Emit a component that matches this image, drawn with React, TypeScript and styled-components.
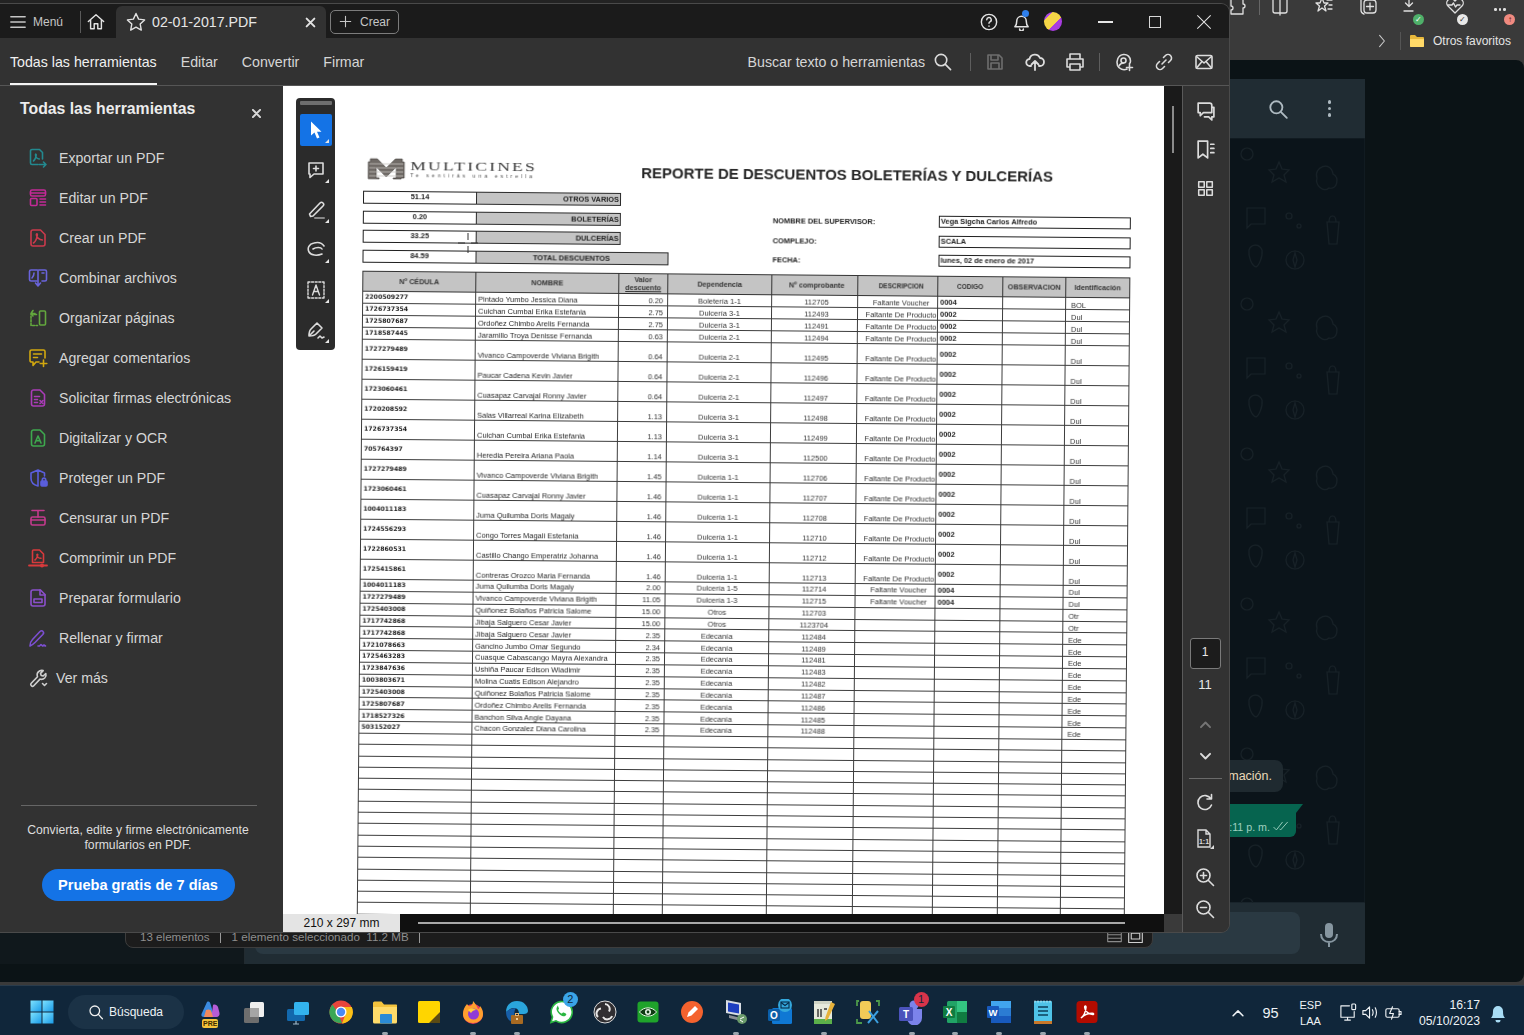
import React from 'react';
import styled, { createGlobalStyle } from 'styled-components';

const GlobalStyle = createGlobalStyle`
  html, body {
    margin: 0;
    width: 1524px;
    height: 1035px;
    overflow: hidden;
    background: #10263a;
    font-family: "Liberation Sans", Arial, sans-serif;
  }
`;

const Icon = styled.svg.attrs<any>(p => ({
  width: p.$size ?? 20,
  height: p.$size ?? 20,
  viewBox: p.viewBox ?? '0 0 20 20',
  fill: 'none',
  stroke: 'currentColor',
  strokeWidth: p.strokeWidth ?? 1.6,
  strokeLinecap: 'round',
  strokeLinejoin: 'round',
}))<{ $size?: number; $color?: string }>`
  display: block;
  flex: none;
  color: ${({ $color }) => $color || 'inherit'};
`;

/* ---------- sidebar tool icons ---------- */
const toolIcons: Record<string, React.ReactNode> = {
  export: (
    <>
      <path d="M14.5 11V4.5L11.5 1.5H4A1.5 1.5 0 0 0 2.5 3v12A1.5 1.5 0 0 0 4 16.5h6" />
      <path d="M5.5 13c1.4-1 2.4-3.5 2.7-6 .1-1-.7-1.2-.7 0 0 2 1.9 3.8 3.8 4" />
      <path d="M11 16.5h7M15.5 14l2.5 2.5-2.5 2.5" />
    </>
  ),
  edit: (
    <>
      <rect x="2.5" y="2" width="15" height="6" rx="1.5" />
      <path d="M2.5 5h15" />
      <rect x="2.5" y="10.5" width="6.5" height="7" rx="1" />
      <path d="M12 11h5.5M12 14h5.5M12 17h5.5" />
    </>
  ),
  create: (
    <>
      <path d="M17 6.5V16a2 2 0 0 1-2 2H5a2 2 0 0 1-2-2V4a2 2 0 0 1 2-2h7.5z" />
      <path d="M5.5 15c2-1.5 3.5-5 3.8-8 .2-1.5-1-1.5-.9 0 .2 2.5 3 5 6 5" />
    </>
  ),
  combine: (
    <>
      <path d="M9 2H3A1.5 1.5 0 0 0 1.5 3.5v8A1.5 1.5 0 0 0 3 13h6M11 2h6a1.5 1.5 0 0 1 1.5 1.5v8A1.5 1.5 0 0 1 17 13h-3" />
      <path d="M10 2v14.5M7.5 15l2.5 3 2.5-3" />
      <path d="M4 10c1-1 2-3 2-5M14 5h2" />
    </>
  ),
  organize: (
    <>
      <rect x="11.5" y="3" width="6" height="14" rx="1" />
      <path d="M8.5 6.5H3v11h6.5" strokeDasharray="2 1.6" />
      <path d="M3 5.5h4M5 2.5l-2 3 2 2.5" />
    </>
  ),
  comment: (
    <>
      <path d="M11 14H8l-3 3.5V14H3.5A1.5 1.5 0 0 1 2 12.5v-9A1.5 1.5 0 0 1 3.5 2h12A1.5 1.5 0 0 1 17 3.5V10" />
      <path d="M5.5 6h8M5.5 9.5h4M15.5 12v6.5M12.2 15.5h6.6" />
    </>
  ),
  sign: (
    <>
      <path d="M16.5 6.5V16a2 2 0 0 1-2 2h-9a2 2 0 0 1-2-2V4a2 2 0 0 1 2-2h6.5z" />
      <path d="M6.5 8.5h5M6.5 11.5h3M6.5 14.5h3M12 12.5l3 3M15 12.5l-3 3" />
    </>
  ),
  ocr: (
    <>
      <path d="M16.5 6.5V16a2 2 0 0 1-2 2h-9a2 2 0 0 1-2-2V4a2 2 0 0 1 2-2h6.5z" />
      <path d="M7 15l3-7 3 7M8 12.7h4" />
    </>
  ),
  protect: (
    <>
      <path d="M10 2L3 5v5.5c0 3.5 2.8 6.5 7 7.5M10 2l6.5 3v3M10 2v16" />
      <rect x="13" y="13" width="6" height="5" rx="1" fill="currentColor" />
      <path d="M14.3 13v-1.2a1.7 1.7 0 0 1 3.4 0V13" />
    </>
  ),
  redact: (
    <>
      <path d="M4 2.5h12M10 2.5V9" />
      <rect x="3" y="9" width="14" height="8" rx="1.5" />
      <path d="M3 12h14" />
    </>
  ),
  compress: (
    <>
      <path d="M15.5 6V14.5H4.5V3a1 1 0 0 1 1-1h6z" />
      <path d="M7 12c1.4-1 2.4-3 2.7-5 .1-1-.8-1-.7 0 .1 1.8 2 3.3 4 3.3" />
      <path d="M1 17.5h18" strokeWidth="1.8" />
      <circle cx="14" cy="17.5" r="1.2" fill="currentColor" />
    </>
  ),
  prepare: (
    <>
      <path d="M17 6.5V16a2 2 0 0 1-2 2H5a2 2 0 0 1-2-2V4a2 2 0 0 1 2-2h7.5z" />
      <path d="M12 2v5h5" />
      <rect x="6" y="11" width="8" height="3.5" />
    </>
  ),
  fill: (
    <>
      <path d="M2 18c0-3 1-5 2.5-6.500L12 3.500c1-1 2.300-1 3 0 .8.800.7 2-.2 3L7.500 14c-1.500 1.400-3 3-5.500 4z" />
      <path d="M10 18h1.500l1.500-1.500 1.500 1.500 1.500-1 1.500 1" />
    </>
  ),
  more: (
    <>
      <path d="M3 15.500l6.500-6.800c-.8-2.200 0-4.500 2-5.700 1.200-.7 2.600-.8 3.700-.4L12.500 5.400l.7 2 2 .6 2.600-2.500c.5 1.500.1 3.300-1.100 4.500-1.400 1.300-3 1.600-4.700 1.100L5.500 18c-1.400 1.200-3.500-1-2.500-2.500z" />
      <path d="M14.5 15.500l2 2 2-2" />
    </>
  ),
};

const tools = [
  { key: 'export', label: 'Exportar un PDF', color: '#23898f' },
  { key: 'edit', label: 'Editar un PDF', color: '#c32a97' },
  { key: 'create', label: 'Crear un PDF', color: '#cb3a4c' },
  { key: 'combine', label: 'Combinar archivos', color: '#6a64dc' },
  { key: 'organize', label: 'Organizar páginas', color: '#63a83e' },
  { key: 'comment', label: 'Agregar comentarios', color: '#d2a80f' },
  { key: 'sign', label: 'Solicitar firmas electrónicas', color: '#aa3cb8' },
  { key: 'ocr', label: 'Digitalizar y OCR', color: '#3ea84e' },
  { key: 'protect', label: 'Proteger un PDF', color: '#5a5edc' },
  { key: 'redact', label: 'Censurar un PDF', color: '#c43a8d' },
  { key: 'compress', label: 'Comprimir un PDF', color: '#d83a3c' },
  { key: 'prepare', label: 'Preparar formulario', color: '#8b50cb' },
  { key: 'fill', label: 'Rellenar y firmar', color: '#7c4fd2' },
  { key: 'more', label: 'Ver más', color: '#cfcfcf' },
];

/* ---------- document data ---------- */
const VOUCHER = 'Faltante Voucher';
const PRODUCT = 'Faltante De Producto';

type ReportRow = [string, string, string, string, string, string, string, string];

const shortTop: ReportRow[] = [
  ['2200509277', 'Pintado Yumbo Jessica Diana', '0.20', 'Boletería 1-1', '112705', VOUCHER, '0004', 'BOL'],
  ['1726737354', 'Cuichan Cumbal Erika Estefania', '2.75', 'Dulcería 3-1', '112493', PRODUCT, '0002', 'Dul'],
  ['1725807687', 'Ordoñez Chimbo Arelis Fernanda', '2.75', 'Dulcería 3-1', '112491', PRODUCT, '0002', 'Dul'],
  ['1718587445', 'Jaramillo Troya Denisse Fernanda', '0.63', 'Dulcería 2-1', '112494', PRODUCT, '0002', 'Dul'],
];

const tallRows: ReportRow[] = [
  ['1727279489', 'Vivanco Campoverde Viviana Brigith', '0.64', 'Dulcería 2-1', '112495', PRODUCT, '0002', 'Dul'],
  ['1726159419', 'Paucar Cadena Kevin Javier', '0.64', 'Dulcería 2-1', '112496', PRODUCT, '0002', 'Dul'],
  ['1723060461', 'Cuasapaz Carvajal Ronny Javier', '0.64', 'Dulcería 2-1', '112497', PRODUCT, '0002', 'Dul'],
  ['1720208592', 'Salas Villarreal Karina Elizabeth', '1.13', 'Dulcería 3-1', '112498', PRODUCT, '0002', 'Dul'],
  ['1726737354', 'Cuichan Cumbal Erika Estefania', '1.13', 'Dulcería 3-1', '112499', PRODUCT, '0002', 'Dul'],
  ['705764397', 'Heredia Pereira Ariana Paola', '1.14', 'Dulcería 3-1', '112500', PRODUCT, '0002', 'Dul'],
  ['1727279489', 'Vivanco Campoverde Viviana Brigith', '1.45', 'Dulcería 1-1', '112706', PRODUCT, '0002', 'Dul'],
  ['1723060461', 'Cuasapaz Carvajal Ronny Javier', '1.46', 'Dulcería 1-1', '112707', PRODUCT, '0002', 'Dul'],
  ['1004011183', 'Juma Quilumba Doris Magaly', '1.46', 'Dulcería 1-1', '112708', PRODUCT, '0002', 'Dul'],
  ['1724556293', 'Congo Torres Magali Estefania', '1.46', 'Dulcería 1-1', '112710', PRODUCT, '0002', 'Dul'],
  ['1722860531', 'Castillo Chango Emperatriz Johanna', '1.46', 'Dulcería 1-1', '112712', PRODUCT, '0002', 'Dul'],
  ['1725415861', 'Contreras Orozco Maria Fernanda', '1.46', 'Dulcería 1-1', '112713', PRODUCT, '0002', 'Dul'],
];

const shortBottom: ReportRow[] = [
  ['1004011183', 'Juma Quilumba Doris Magaly', '2.00', 'Dulcería 1-5', '112714', VOUCHER, '0004', 'Dul'],
  ['1727279489', 'Vivanco Campoverde Viviana Brigith', '11.05', 'Dulcería 1-3', '112715', VOUCHER, '0004', 'Dul'],
  ['1725403008', 'Quiñonez Bolaños Patricia Salome', '15.00', 'Otros', '112703', '', '', 'Otr'],
  ['1717742868', 'Jibaja Salguero Cesar Javier', '15.00', 'Otros', '1123704', '', '', 'Otr'],
  ['1717742868', 'Jibaja Salguero Cesar Javier', '2.35', 'Edecanía', '112484', '', '', 'Ede'],
  ['1721078663', 'Gancino Jumbo Omar Segundo', '2.34', 'Edecanía', '112489', '', '', 'Ede'],
  ['1725463283', 'Cuasque Cabascango Mayra Alexandra', '2.35', 'Edecanía', '112481', '', '', 'Ede'],
  ['1723847636', 'Ushiña Paucar Edison Wladimir', '2.35', 'Edecanía', '112483', '', '', 'Ede'],
  ['1003803671', 'Molina Cuatis Edison Alejandro', '2.35', 'Edecanía', '112482', '', '', 'Ede'],
  ['1725403008', 'Quiñonez Bolaños Patricia Salome', '2.35', 'Edecanía', '112487', '', '', 'Ede'],
  ['1725807687', 'Ordoñez Chimbo Arelis Fernanda', '2.35', 'Edecanía', '112486', '', '', 'Ede'],
  ['1718527326', 'Banchon Silva Angie Dayana', '2.35', 'Edecanía', '112485', '', '', 'Ede'],
  ['503152027', 'Chacon Gonzalez Diana Carolina', '2.35', 'Edecanía', '112488', '', '', 'Ede'],
];

const summary = [
  { value: '51.14', label: 'OTROS VARIOS' },
  { value: '0.20', label: 'BOLETERÍAS' },
  { value: '33.25', label: 'DULCERÍAS' },
  { value: '84.59', label: 'TOTAL DESCUENTOS', total: true },
];

const supervisor = [
  ['NOMBRE DEL SUPERVISOR:', 'Vega Sigcha Carlos Alfredo'],
  ['COMPLEJO:', 'SCALA'],
  ['FECHA:', 'lunes, 02 de enero de 2017'],
];

const columnWidths = [113, 143, 49, 104, 86, 80, 65, 63, 64];
const blankRows = Array.from({ length: 18 }, (_, i) => i);

/* ---------- taskbar icons ---------- */
const Win = () => (
  <svg width="24" height="24" viewBox="0 0 24 24">
    <defs>
      <linearGradient id="win" x1="0" y1="0" x2="1" y2="1">
        <stop offset="0" stopColor="#7fe3ff" />
        <stop offset="1" stopColor="#1a9be8" />
      </linearGradient>
    </defs>
    <rect x="0.5" y="0.5" width="11" height="11" fill="url(#win)" />
    <rect x="12.5" y="0.5" width="11" height="11" fill="url(#win)" />
    <rect x="0.5" y="12.5" width="11" height="11" fill="url(#win)" />
    <rect x="12.5" y="12.5" width="11" height="11" fill="url(#win)" />
  </svg>
);

const Copilot = () => (
  <svg width="24" height="24" viewBox="0 0 24 24">
    <path d="M9 2c2-1 3 0 3.5 2l3 10c.5 2-1 3-3 3H6c-2 0-3-1-2.5-3z" fill="#3b8be0" />
    <path d="M15 5c2-1 4 0 5 2l1.5 6c.5 2-1 4-3 4h-5z" fill="#b65cd6" />
    <path d="M8 10c2-1 5-1 5.5 2L15 17H6z" fill="#f28a5c" />
  </svg>
);

const TaskView = () => (
  <svg width="26" height="26" viewBox="0 0 26 26">
    <rect x="3" y="9" width="15" height="15" rx="1.5" fill="#6e6e6e" />
    <rect x="9" y="3" width="14" height="15" rx="1.5" fill="#efefef" />
    <rect x="9" y="9" width="9" height="9" fill="#a5a5a5" />
  </svg>
);

const Remote = () => (
  <svg width="26" height="26" viewBox="0 0 26 26">
    <rect x="2" y="10" width="18" height="12" rx="1.5" fill="#1268ad" />
    <rect x="9" y="3" width="15" height="13" rx="1.5" fill="#33b3ee" />
    <path d="M11 22v3M8 25h6" stroke="#9fb8c9" strokeWidth="1.2" />
  </svg>
);

const Chrome = () => (
  <svg width="24" height="24" viewBox="0 0 24 24">
    <circle cx="12" cy="12" r="11.5" fill="#e8453c" />
    <path d="M1.5 17A11.5 11.5 0 0 1 3.5 4.5L9 13l4 10A11.5 11.5 0 0 1 1.5 17z" fill="#3aa757" />
    <path d="M12 7h10.8A11.5 11.5 0 0 1 13 23.5L17 13z" fill="#fbc116" />
    <circle cx="12" cy="12" r="5.5" fill="#fff" />
    <circle cx="12" cy="12" r="4.2" fill="#4a8af4" />
  </svg>
);

const Folder = () => (
  <svg width="26" height="26" viewBox="0 0 26 26">
    <path d="M1 4a1.5 1.5 0 0 1 1.5-1.5h7l2.5 3h12.5A1.5 1.5 0 0 1 25 7v16H1z" fill="#f4c33d" />
    <path d="M1 8h24v15a1.5 1.5 0 0 1-1.5 1.5h-21A1.5 1.5 0 0 1 1 23z" fill="#ffdb6a" />
    <rect x="8" y="15" width="12" height="9.5" rx="1" fill="#2b8bd6" />
  </svg>
);

const Sticky = () => (
  <svg width="24" height="24" viewBox="0 0 24 24">
    <rect x="1" y="1" width="22" height="22" rx="1.5" fill="#ffd500" />
    <path d="M23 12v11H12z" fill="#5a4a14" />
  </svg>
);

const Firefox = () => (
  <svg width="24" height="24" viewBox="0 0 24 24">
    <circle cx="12" cy="14" r="10" fill="#e8395d" />
    <path d="M6 4c-3 3-4 7-4 10 0 5 4 9 10 9s10-4 10-9c0-3-1-6-3-8 0 2-1 3-2 3-1-3-3-6-5-8 0 3-1 4-3 5C8 6.5 7 5.5 6 4z" fill="#ff9f2e" />
    <circle cx="12.5" cy="14" r="5.5" fill="#8f3ad6" />
    <path d="M7 10c2-2 6-2 8 0-2 0-4 1-5 3-1-1-2-2-3-3z" fill="#ffcf3a" />
  </svg>
);

const Edge = () => (
  <svg width="24" height="24" viewBox="0 0 24 24">
    <path d="M1 12C1 5 6 1 12 1c7 0 11 5 11 10 0 2-2 3-4 3h-5c0-4-2-6-5-6-4 0-6 3-8 4z" fill="#2aa5dc" />
    <path d="M1 12c0 6 4 11 10 11 1-2 0-4-1-6-1-3-1-6 1-9-5 0-8 2-10 4z" fill="#175ea8" />
    <rect x="6" y="15" width="12" height="9" rx="1" fill="#a86a22" />
    <rect x="10.5" y="13.5" width="3" height="2" fill="none" stroke="#e6b06a" />
    <rect x="11" y="18" width="2" height="2" fill="#f2cf95" />
  </svg>
);

const WhatsApp = () => (
  <svg width="24" height="24" viewBox="0 0 24 24">
    <path d="M2 22.5l1.5-5.500A10.500 10.500 0 1 1 7 20.800z" fill="#fff" stroke="#2bb741" strokeWidth="1.6" />
    <path d="M8.5 6.5c-1 1-1.500 2.500-.5 4.500 1.300 2.700 3.400 4.500 6 5.200 1.500.4 3-.5 3.300-1.700.1-.5-.1-.8-.6-1l-2-1c-.5-.2-.8 0-1 .3-.4.600-.8.900-1.400.6-1.300-.6-2.300-1.600-3-3-.2-.5 0-.8.400-1.200.3-.4.300-.7.200-1l-.8-1.900c-.2-.5-.7-.6-1-.4z" fill="#2bb741" />
  </svg>
);

const Obs = () => (
  <svg width="24" height="24" viewBox="0 0 24 24">
    <circle cx="12" cy="12" r="11" fill="#302e31" stroke="#dcdcdc" strokeWidth="1" />
    <path d="M12 4a5 5 0 0 1 4 7.5M5 17a5 5 0 0 1 3-8.5M19 16a5 5 0 0 1-9 1" stroke="#e6e6e6" strokeWidth="2" fill="none" />
  </svg>
);

const EyeApp = () => (
  <svg width="24" height="24" viewBox="0 0 24 24">
    <rect x="1.5" y="1.5" width="21" height="21" rx="3" fill="#1fa32b" />
    <path d="M3.5 12c4-5.5 13-5.5 17 0-4 5.5-13 5.5-17 0z" fill="#0e3a12" stroke="#e6f5e6" />
    <circle cx="12" cy="12" r="3" fill="#e6f5e6" />
    <circle cx="12" cy="12" r="1.4" fill="#0e3a12" />
  </svg>
);

const PenApp = () => (
  <svg width="24" height="24" viewBox="0 0 24 24">
    <circle cx="12" cy="12" r="11" fill="#f4622e" />
    <path d="M7 17l1.5-4.5L15 6l3 3-6.5 6.5z" fill="#fff" />
  </svg>
);

const Computer = () => (
  <svg width="26" height="26" viewBox="0 0 26 26">
    <path d="M3 1l15 3v13L3 14z" fill="#d8dde3" />
    <path d="M5 3.5l11 2v9l-11-2z" fill="#1d3fc0" />
    <path d="M6 16l12 3v3l-12-3z" fill="#8a8f96" />
    <circle cx="19" cy="20" r="5" fill="#6a9a6a" />
    <path d="M17 20l4-2M17 21l3 2" stroke="#fff" />
  </svg>
);

const Outlook = () => (
  <svg width="26" height="26" viewBox="0 0 26 26">
    <rect x="5" y="9" width="20" height="16" rx="1.5" fill="#0f78d4" />
    <rect x="1" y="10" width="12" height="12" rx="1.5" fill="#0a5ea8" />
    <text x="7" y="19.5" textAnchor="middle" fontSize="10" fontWeight="700" fill="#fff" fontFamily="Liberation Sans">O</text>
    <circle cx="18" cy="6" r="7" fill="#34a8dc" />
    <rect x="14" y="3" width="8" height="6" fill="none" stroke="#062a4a" strokeWidth="1.1" />
    <path d="M14 3.5l4 3 4-3" fill="none" stroke="#062a4a" strokeWidth="1.1" />
  </svg>
);

const Notes = () => (
  <svg width="26" height="26" viewBox="0 0 26 26">
    <rect x="3" y="2" width="18" height="23" fill="#e6e9dc" />
    <path d="M3 2h18v3H3z" fill="#cfd3c4" />
    <path d="M7 10v8M10 10v8M13 10h3" stroke="#333" strokeWidth="1.4" />
    <path d="M3 20h18v5H3z" fill="#5bb04a" />
    <path d="M20 3l4 2-7 15-3 2 .5-4z" fill="#e8b23a" />
  </svg>
);

const Tools = () => (
  <svg width="26" height="26" viewBox="0 0 26 26">
    <rect x="5" y="2" width="11" height="18" rx="3" fill="#f2cb58" />
    <path d="M4 2h-2v5M21 2h3v5M2 20v4h5" fill="none" stroke="#4d9a4a" strokeWidth="1.8" />
    <path d="M13 24L23 12M14 12l9 12" stroke="#3ca0e0" strokeWidth="2" />
  </svg>
);

const Teams = () => (
  <svg width="26" height="26" viewBox="0 0 26 26">
    <circle cx="16" cy="6" r="4.5" fill="#7b83eb" />
    <path d="M9 10h15v9a6 6 0 0 1-15 0z" fill="#7b83eb" />
    <rect x="1" y="8" width="14" height="14" rx="1.5" fill="#4b53bc" />
    <text x="8" y="19" textAnchor="middle" fontSize="10" fontWeight="700" fill="#fff" fontFamily="Liberation Sans">T</text>
  </svg>
);

const Excel = () => (
  <svg width="26" height="26" viewBox="0 0 26 26">
    <rect x="5" y="2" width="20" height="22" rx="1.5" fill="#21a366" />
    <rect x="15" y="2" width="10" height="11" fill="#33c481" />
    <rect x="15" y="13" width="10" height="11" fill="#107c41" />
    <rect x="1" y="7" width="12" height="12" rx="1" fill="#107c41" />
    <text x="7" y="16.5" textAnchor="middle" fontSize="10" fontWeight="700" fill="#fff" fontFamily="Liberation Sans">X</text>
  </svg>
);

const Word = () => (
  <svg width="26" height="26" viewBox="0 0 26 26">
    <rect x="5" y="2" width="20" height="22" rx="1.5" fill="#2b7cd3" />
    <rect x="5" y="2" width="20" height="7" fill="#41a5ee" />
    <rect x="5" y="17" width="20" height="7" fill="#185abd" />
    <rect x="1" y="7" width="12" height="12" rx="1" fill="#185abd" />
    <text x="7" y="16.5" textAnchor="middle" fontSize="9.5" fontWeight="700" fill="#fff" fontFamily="Liberation Sans">W</text>
  </svg>
);

const Notepad = () => (
  <svg width="26" height="26" viewBox="0 0 26 26">
    <rect x="4" y="2" width="18" height="22" rx="1" fill="#4fc3e8" />
    <path d="M8 8h10M8 12h10M8 16h10" stroke="#0d3f5a" strokeWidth="1.5" />
    <rect x="4" y="22" width="18" height="3" fill="#c9782a" />
    <path d="M5 1.5v2M8 1.5v2M11 1.5v2M14 1.5v2M17 1.5v2M20 1.5v2" stroke="#c8eef8" />
  </svg>
);

const AcrobatApp = () => (
  <svg width="24" height="24" viewBox="0 0 24 24">
    <rect x="1.5" y="1" width="21" height="22" rx="3.5" fill="#b30b00" />
    <path d="M6 18c2-1.5 4.5-6 5-10.500.2-2-1.500-2-1.300 0 .3 3.500 3.800 7 8 7 1.300 0 1.300-1.300-.5-1.300-3.500 0-8.500 2-11.200 4.800z" fill="none" stroke="#fff" strokeWidth="1.5" />
  </svg>
);

const taskItems: { key: string; icon: React.ReactNode; open?: boolean; badge?: string; badgeColor?: string; tag?: string }[] = [
  { key: 'copilot', icon: <Copilot />, tag: 'PRE' },
  { key: 'taskview', icon: <TaskView /> },
  { key: 'remote', icon: <Remote /> },
  { key: 'chrome', icon: <Chrome /> },
  { key: 'folder', icon: <Folder />, open: true },
  { key: 'sticky', icon: <Sticky /> },
  { key: 'firefox', icon: <Firefox />, open: true },
  { key: 'edge', icon: <Edge />, open: true },
  { key: 'whatsapp', icon: <WhatsApp />, badge: '2', badgeColor: '#3aa4e8' },
  { key: 'obs', icon: <Obs /> },
  { key: 'eye', icon: <EyeApp /> },
  { key: 'pen', icon: <PenApp /> },
  { key: 'computer', icon: <Computer />, open: true },
  { key: 'outlook', icon: <Outlook /> },
  { key: 'notes', icon: <Notes />, open: true },
  { key: 'tools', icon: <Tools /> },
  { key: 'teams', icon: <Teams />, open: true, badge: '1', badgeColor: '#d8344a' },
  { key: 'excel', icon: <Excel />, open: true },
  { key: 'word', icon: <Word />, open: true },
  { key: 'notepad', icon: <Notepad />, open: true },
  { key: 'acrobat', icon: <AcrobatApp />, open: true },
];

const App: React.FC = () => (
  <Desktop>
    <GlobalStyle />

    <Browser>
      <BrowserIcons>
        <BrowserBtn>
          <Icon strokeWidth="1.3">
            <path d="M7 2a2 2 0 0 1 4 0h5v5a2 2 0 0 1 0 4v6H4v-4a2 2 0 0 0 0-4V2z" />
          </Icon>
        </BrowserBtn>
        <BrowserSep />
        <BrowserBtn>
          <Icon strokeWidth="1.3">
            <rect x="3" y="1" width="14" height="15" rx="2" />
            <path d="M10 -1v19" />
          </Icon>
        </BrowserBtn>
        <BrowserBtn>
          <Icon strokeWidth="1.3">
            <path d="M8 1l2 5h4l-3.5 3 1.5 5-4-3-4 3 1.5-5L2 6h4zM13 3h5M15 8h3M14 12h4" />
          </Icon>
        </BrowserBtn>
        <BrowserBtn>
          <Icon strokeWidth="1.3">
            <rect x="6" y="3" width="12" height="13" rx="3" />
            <path d="M3 3v10a4 4 0 0 0 3 4M12 6v7M8.5 9.5h7" />
          </Icon>
        </BrowserBtn>
        <BrowserBtn>
          <Icon strokeWidth="1.3">
            <path d="M8 0v9M4.5 6L8 9.5 11.5 6M3 14h9" />
          </Icon>
          <TinyBadge $bg="#4fb06a">✓</TinyBadge>
        </BrowserBtn>
        <BrowserBtn>
          <Icon strokeWidth="1.3">
            <path d="M10 16L3 9a4 4 0 0 1 6-6l1 1 1-1a4 4 0 0 1 6 6z" />
            <path d="M3 8h4l1.5-2 2 4 1.5-2h3" />
          </Icon>
          <TinyBadge $bg="#e8e8e8" $fg="#333">✓</TinyBadge>
        </BrowserBtn>
        <BrowserBtn $wide>
          <MoreDots><i /><i /><i /></MoreDots>
          <TinyBadge $bg="#f08a80" $fg="#5a0f0a">↑</TinyBadge>
        </BrowserBtn>
      </BrowserIcons>

      <BookmarkBar>
        <Icon $size={16} strokeWidth="1.3"><path d="M7 3l6 7-6 7" /></Icon>
        <BookmarkSep />
        <svg width="16" height="16" viewBox="0 0 16 16">
          <path d="M1 3a1 1 0 0 1 1-1h4l2 2h6a1 1 0 0 1 1 1v8a1 1 0 0 1-1 1H2a1 1 0 0 1-1-1z" fill="#e8b93c" />
          <path d="M1 6h14v7a1 1 0 0 1-1 1H2a1 1 0 0 1-1-1z" fill="#ffd968" />
        </svg>
        <BookmarkLabel>Otros favoritos</BookmarkLabel>
      </BookmarkBar>

      <WebPage>
        <ChatList />
        <ChatMain>
          <ChatHeader>
            <Icon $size={22} $color="#aebac1" strokeWidth="1.7"><circle cx="8.5" cy="8.5" r="5.5" /><path d="M13 13l5 5" /></Icon>
            <KebabDots><i /><i /><i /></KebabDots>
          </ChatHeader>
          <ChatBody>
            <Wallpaper width="136" height="765" viewBox="0 0 136 765">
              <defs>
                <pattern id="wa" width="136" height="150" patternUnits="userSpaceOnUse">
                  <circle cx="18" cy="16" r="6" />
                  <path d="M50 24l3 7 7 1-5 5 2 7-7-4-7 4 2-7-5-5 7-1z" />
                  <path d="M88 40c-4-11 14-18 16-4 7 4 4 16-4 14-6 5-14-3-12-10z" />
                  <path d="M18 70h18v16H22l-4 4z" />
                  <circle cx="60" cy="78" r="3" />
                  <circle cx="70" cy="88" r="2" />
                  <path d="M98 84h12l-2 22h-8zM100 84c0-8 7-8 7 0" />
                  <path d="M20 112c2-6 10-7 13 0 1 6-3 16-6 17-4-1-8-10-7-17z" />
                  <circle cx="66" cy="122" r="9" />
                  <path d="M66 115l2 7-2 7-2-7z" />
                </pattern>
              </defs>
              <rect width="136" height="765" fill="url(#wa)" />
            </Wallpaper>
            <IncomingBubble>información.</IncomingBubble>
            <OutgoingBubble>
              4:11 p. m.
              <Icon $size={17} $color="#9fd0c0" strokeWidth="1.1"><path d="M1 11l3 3 7-9M8 13l1 1 8-9" /></Icon>
            </OutgoingBubble>
          </ChatBody>
          <Composer>
            <ComposerInput />
            <MicBtn>
              <svg width="22" height="26" viewBox="0 0 22 26">
                <rect x="7" y="1" width="8" height="15" rx="4" fill="#8696a0" />
                <path d="M3 12c0 5 3.5 8 8 8s8-3 8-8M11 20v5" stroke="#8696a0" strokeWidth="2" fill="none" />
              </svg>
            </MicBtn>
          </Composer>
        </ChatMain>
      </WebPage>
    </Browser>

    <Explorer>
      <StatusText>13 elementos</StatusText>
      <StatusBar />
      <StatusText>1 elemento seleccionado&nbsp;&nbsp;11.2 MB</StatusText>
      <StatusBar />
      <ExplorerViews>
        <Icon $size={17} $color="#8a8a8a" strokeWidth="1.3"><path d="M2 4h16v12H2zM2 8h16M2 12h16" /></Icon>
        <Icon $size={17} $color="#d0d0d0" strokeWidth="1.3"><path d="M2 3h16v14H2zM5 6h10v7H5z" /></Icon>
      </ExplorerViews>
    </Explorer>

    <AcrobatWindow>
      <TitleBar>
        <MenuBtn>
          <Icon $size={16} strokeWidth="1.7"><path d="M1 3.5h18M1 10h18M1 16.5h18" /></Icon>
          <span>Menú</span>
        </MenuBtn>
        <TitleSep />
        <HomeBtn>
          <Icon $size={18} strokeWidth="1.6"><path d="M1.5 9.5L10 2l8.5 7.5M4 8v9.500h4V12h4v5.500h4V8" /></Icon>
        </HomeBtn>
        <DocTab>
          <Icon $size={20} strokeWidth="1.4"><path d="M10 1.5l2.600 5.600 6 .8-4.400 4.200 1.100 6L10 15.200 4.700 18.100l1.100-6L1.400 7.900l6-.8z" /></Icon>
          <DocTabName>02-01-2017.PDF</DocTabName>
          <Icon $size={11} strokeWidth="3.6"><path d="M3 3l14 14M17 3L3 17" /></Icon>
        </DocTab>
        <CreateBtn>
          <Icon $size={13} strokeWidth="1.7"><path d="M10 2v16M2 10h16" /></Icon>
          <span>Crear</span>
        </CreateBtn>
        <TitleRight>
          <TitleBtn>
            <Icon $size={18}><circle cx="10" cy="10" r="8.5" /><path d="M7.5 7.5a2.5 2.5 0 1 1 3.5 2.3c-.7.3-1 .8-1 1.700" /><path d="M10 14.5v.2" /></Icon>
          </TitleBtn>
          <TitleBtn>
            <Icon $size={19}><path d="M3 15.5c1.5-1.500 2-3 2-6a5 5 0 0 1 10 0c0 3 .5 4.500 2 6zM8 18a2 2 0 0 0 4 0" /></Icon>
            <BellDot />
          </TitleBtn>
          <TitleBtn>
            <Avatar />
          </TitleBtn>
          <WindowBtn $first>
            <MinimizeBar />
          </WindowBtn>
          <WindowBtn>
            <MaximizeBox />
          </WindowBtn>
          <WindowBtn>
            <Icon $size={16} strokeWidth="1.3"><path d="M2 2l16 16M18 2L2 18" /></Icon>
          </WindowBtn>
        </TitleRight>
      </TitleBar>

      <ToolBar>
        <ToolTab $active>Todas las herramientas</ToolTab>
        <ToolTab>Editar</ToolTab>
        <ToolTab>Convertir</ToolTab>
        <ToolTab>Firmar</ToolTab>
        <ToolRight>
          <SearchLabel>Buscar texto o herramientas</SearchLabel>
          <SearchIcon>
            <Icon $size={19} strokeWidth="1.7"><circle cx="8.5" cy="8.5" r="6" /><path d="M13 13l5.5 5.5" /></Icon>
          </SearchIcon>
          <ToolSep $first />
          <ToolBtn $dim>
            <Icon><path d="M3 3h11l3 3v11H3zM6 3v5h7V3M6 17v-6h8v6" /></Icon>
          </ToolBtn>
          <ToolBtn>
            <Icon strokeWidth="1.8"><path d="M6 14H5a3.5 3.5 0 0 1-.5-7A5.5 5.5 0 0 1 15 6a4 4 0 0 1 0 8h-1M10 18V9M6.5 12.5L10 9l3.5 3.5" /></Icon>
          </ToolBtn>
          <ToolBtn>
            <Icon><path d="M5 7V2h10v5M5 15H2V7h16v8h-3M5 12h10v6H5z" /></Icon>
          </ToolBtn>
          <ToolSep />
          <ToolBtn>
            <Icon><path d="M13 17c-3 1.5-8 .5-9.5-3.5C2 9 4 3 9.5 2.5c4-.3 7 2.5 7 6.5 0 1-.3 2-1 2.5" /><circle cx="9.5" cy="8.5" r="2.5" /><path d="M5 14c1-2.5 2.5-3 4.5-3M15.5 12.5v6M12.5 15.5h6" /></Icon>
          </ToolBtn>
          <ToolBtn>
            <Icon><path d="M8 12l4-4M9.5 5.5l2-2a3.5 3.5 0 0 1 5 5l-2 2M10.5 14.5l-2 2a3.5 3.5 0 0 1-5-5l2-2" /></Icon>
          </ToolBtn>
          <ToolBtn>
            <Icon><rect x="2" y="3.5" width="16" height="13" rx="1.5" /><path d="M2.5 4.5L10 11l7.5-6.5M2.5 16l5.5-6.5M17.5 16L12 9.5" /></Icon>
          </ToolBtn>
        </ToolRight>
      </ToolBar>

      <WindowBody>
        <Sidebar>
          <SidebarHeader>
            <SidebarTitle>Todas las herramientas</SidebarTitle>
            <SidebarClose>
              <Icon $size={9} strokeWidth="4.5"><path d="M2 2l16 16M18 2L2 18" /></Icon>
            </SidebarClose>
          </SidebarHeader>
          <ToolList>
            {tools.map(tool => (
              <ToolRow key={tool.key} $tight={tool.key === 'more'}>
                <Icon $color={tool.color}>{toolIcons[tool.key]}</Icon>
                <span>{tool.label}</span>
              </ToolRow>
            ))}
          </ToolList>
          <SidebarFooter>
            <FooterText>Convierta, edite y firme electrónicamente formularios en PDF.</FooterText>
            <TrialBtn>Prueba gratis de 7 días</TrialBtn>
          </SidebarFooter>
        </Sidebar>

        <Stage>
          <DocRow>
            <Paper>
              <Sheet>
                <SheetTop>
                  <Logo>
                    <svg width="38" height="22" viewBox="0 0 38 22">
                      <path d="M1 20V4h2V1h7l9 9 9-9h7v3h2v16h-3v1H26v-1h3V9L19 19 9 9v11h3v1H1z" fill="#6f6a66" stroke="#3c3a38" strokeWidth="0.6" />
                      <path d="M2 6h34M2 10h34M2 14h34M2 18h34" stroke="#c5c2be" strokeWidth="0.8" />
                    </svg>
                    <LogoWords>
                      <LogoName>MULTICINES</LogoName>
                      <LogoTag>Te sentirás una estrella</LogoTag>
                    </LogoWords>
                  </Logo>
                  <ReportTitle>REPORTE DE DESCUENTOS BOLETERÍAS Y DULCERÍAS</ReportTitle>
                </SheetTop>

                <InfoRow>
                  <SummaryList>
                    {summary.map(item => (
                      <SummaryRow key={item.label}>
                        <SummaryValue>{item.value}</SummaryValue>
                        <SummaryLabel $total={item.total}>{item.label}</SummaryLabel>
                      </SummaryRow>
                    ))}
                  </SummaryList>
                  <SupervisorGrid>
                    {supervisor.map(([label, value]) => (
                      <React.Fragment key={label}>
                        <SupervisorLabel>{label}</SupervisorLabel>
                        <SupervisorValue>{value}</SupervisorValue>
                      </React.Fragment>
                    ))}
                  </SupervisorGrid>
                </InfoRow>

                <ReportTable>
                  <colgroup>
                    {columnWidths.map((w, i) => <col key={i} width={w} />)}
                  </colgroup>
                  <thead>
                    <tr>
                      <HeadCell>Nº CÉDULA</HeadCell>
                      <HeadCell>NOMBRE</HeadCell>
                      <HeadCell>Valor<br /><u>descuento</u></HeadCell>
                      <HeadCell>Dependencia</HeadCell>
                      <HeadCell $shift={4}>Nº comprobante</HeadCell>
                      <HeadCell $small $shift={7}>DESCRIPCION</HeadCell>
                      <HeadCell $small>CODIGO</HeadCell>
                      <HeadCell>OBSERVACION</HeadCell>
                      <HeadCell>Identificación</HeadCell>
                    </tr>
                  </thead>
                  <tbody>
                    {[
                      ...shortTop.map(r => ({ r, h: 12 })),
                      ...tallRows.map(r => ({ r, h: 20 })),
                      ...shortBottom.map(r => ({ r, h: 11.85 })),
                    ].map(({ r, h }, i) => (
                      <ReportTr key={i} $h={h}>
                        <IdCell>{r[0]}</IdCell>
                        <NameCell>{r[1]}</NameCell>
                        <AmountCell>{r[2]}</AmountCell>
                        <CenterCell>{r[3]}</CenterCell>
                        <CenterCell $shift={4}>{r[4]}</CenterCell>
                        <CenterCell $shift={7}>{r[5]}</CenterCell>
                        <CodeCell>{r[6]}</CodeCell>
                        <CenterCell />
                        <TagCell>{r[7]}</TagCell>
                      </ReportTr>
                    ))}
                    {blankRows.map(i => (
                      <ReportTr key={i} $h={11.3}>
                        {columnWidths.map((_, c) => <CenterCell key={c} />)}
                      </ReportTr>
                    ))}
                  </tbody>
                </ReportTable>
              </Sheet>

              <CrossHair width="22" height="22" viewBox="0 0 22 22">
                <path d="M11 1v7M11 14v7M1 11h7M14 11h7" stroke="#333" strokeWidth="1" />
              </CrossHair>

              <FloatingTools>
                <Handle />
                <FloatBtn $active>
                  <svg width="20" height="20" viewBox="0 0 20 20"><path d="M5 1.5v14l3.5-3 2.5 6 2.5-1-2.5-5.800h4.500z" fill="#fff" /></svg>
                </FloatBtn>
                <FloatBtn>
                  <Icon><path d="M3 3h14v11H8l-4 3.5V14H3zM10 6v5M7.5 8.5h5" /></Icon>
                </FloatBtn>
                <FloatBtn>
                  <Icon><path d="M3.5 14l1 2.5 2.5-.5L17 6c1-1 1-2 0-3s-2-1-3 0z" /><path d="M9 18h9" stroke="#888" strokeWidth="2" /></Icon>
                </FloatBtn>
                <FloatBtn>
                  <Icon><path d="M18 6c-2-3-6-4-10-3C3 4 1 8 3 12c2 3.5 8 4 13 2" /><path d="M7 9c3-2 8-2 9 0" /></Icon>
                </FloatBtn>
                <FloatBtn>
                  <Icon strokeWidth="1.4"><path d="M2 2h16M2 18h16M2 2v16M18 2v16" strokeDasharray="2 1.6" /><path d="M6.5 15L10 5l3.5 10M7.800 11.500h4.400" /></Icon>
                </FloatBtn>
                <FloatBtn>
                  <Icon><path d="M3 16c0-4 1-6 2-7l6-6 5 5-6 6c-1 1-3 2-7 2zM3 16l5-5" /><path d="M12 18l2-2 2 2 2-1" /></Icon>
                </FloatBtn>
              </FloatingTools>
            </Paper>
            <ScrollTrack>
              <ScrollThumb />
            </ScrollTrack>
          </DocRow>
          <DocStatus>
            <PageSize>210 x 297 mm</PageSize>
            <HScroll />
            <StatusCorner />
          </DocStatus>
        </Stage>

        <Rail>
          <RailBtn $h={39}>
            <Icon $size={21}><path d="M3 3h11a2 2 0 0 1 2 2v7H8l-3 3v-3H3z" /><path d="M16 7h2v9h-2v3l-3-3H9" /></Icon>
          </RailBtn>
          <RailBtn $h={39}>
            <Icon $size={21}><path d="M3 2h9v16l-4.500-3.500L3 18zM15 5h3M15 9h3M15 13h3" /></Icon>
          </RailBtn>
          <RailBtn $h={39}>
            <Icon $size={17} strokeWidth="1.8"><rect x="2" y="2" width="6.5" height="6.5" /><rect x="11.5" y="2" width="6.5" height="6.5" /><rect x="2" y="11.5" width="6.5" height="6.5" /><rect x="11.5" y="11.5" width="6.5" height="6.5" /></Icon>
          </RailBtn>
          <RailSpacer />
          <PageBox>1</PageBox>
          <PageTotal>11</PageTotal>
          <RailBtn $h={32} $dim $gap>
            <Icon $size={13} strokeWidth="3"><path d="M3 14l7-7 7 7" /></Icon>
          </RailBtn>
          <RailBtn $h={32}>
            <Icon $size={13} strokeWidth="3"><path d="M3 6l7 7 7-7" /></Icon>
          </RailBtn>
          <RailSep />
          <RailBtn $h={36}>
            <Icon><path d="M16.5 13a7 7 0 1 1-.5-6M16.5 2.5V7H12" /></Icon>
          </RailBtn>
          <RailBtn $h={38}>
            <svg width="20" height="22" viewBox="0 0 20 22" fill="none" stroke="#dcdcdc" strokeWidth="1.4">
              <path d="M3 2h8l4 4v13H3zM11 2v4h4" />
              <text x="9" y="15.5" textAnchor="middle" fontSize="7" fill="#dcdcdc" stroke="none" fontFamily="Liberation Sans" fontWeight="700">1:1</text>
              <path d="M19 17v4h-4z" fill="#dcdcdc" stroke="none" />
            </svg>
          </RailBtn>
          <RailBtn $h={38}>
            <Icon><circle cx="8.5" cy="8.5" r="6.5" /><path d="M13.5 13.5l5 5M8.5 5.5v6M5.5 8.5h6" /></Icon>
          </RailBtn>
          <RailBtn $h={26}>
            <Icon><circle cx="8.5" cy="8.5" r="6.5" /><path d="M13.5 13.5l5 5M5.5 8.5h6" /></Icon>
          </RailBtn>
        </Rail>
      </WindowBody>
    </AcrobatWindow>

    <Taskbar>
      <StartBtn><Win /></StartBtn>
      <SearchPill>
        <Icon $size={16} $color="#f0f0f0"><circle cx="8.5" cy="8.5" r="6" /><path d="M13 13l5 5.5" /></Icon>
        <span>Búsqueda</span>
      </SearchPill>
      <TaskIcons>
        {taskItems.map(item => (
          <TaskBtn key={item.key}>
            {item.icon}
            {item.tag && <TaskTag>{item.tag}</TaskTag>}
            {item.badge && <TaskBadge $bg={item.badgeColor}>{item.badge}</TaskBadge>}
            {item.open && <TaskDot />}
          </TaskBtn>
        ))}
      </TaskIcons>
      <Tray>
        <TrayChevron>
          <Icon $size={14} strokeWidth="2.2"><path d="M3 14l7-7 7 7" /></Icon>
        </TrayChevron>
        <TrayNumber>95</TrayNumber>
        <TrayLang>ESP<br />LAA</TrayLang>
        <TrayIcons>
          <Icon $size={19} strokeWidth="1.2"><path d="M11 3H2v12h14V9M6 18h6M9 15v3" /><rect x="13.5" y="1" width="4" height="6" rx="1" /></Icon>
          <Icon $size={19} strokeWidth="1.2"><path d="M2 8v4h3l4 4V4L5 8zM12 7c1 2 1 4 0 6M15 5c1.5 3 1.5 7 0 10" /></Icon>
          <Icon $size={19} strokeWidth="1.2"><rect x="3" y="6" width="14" height="9" rx="1.5" /><path d="M10 4L7 11h4l-2 6" /><path d="M17 9h2v3h-2" /></Icon>
        </TrayIcons>
        <Clock>16:17<br />05/10/2023</Clock>
        <svg width="16" height="20" viewBox="0 0 16 20">
          <path d="M1 15c1.5-1.5 2-3 2-7a5 5 0 0 1 10 0c0 4 .5 5.5 2 7z" fill="#a8dcf5" />
          <path d="M5.5 17a2.5 2.5 0 0 0 5 0z" fill="#a8dcf5" />
        </svg>
      </Tray>
    </Taskbar>
  </Desktop>
);

/* ---------- desktop ---------- */
const Desktop = styled.div`
  position: relative;
  width: 1524px;
  height: 1035px;
  overflow: hidden;
  display: flex;
  flex-direction: column;
`;

const Browser = styled.div`
  flex: 1;
  min-height: 0;
  display: flex;
  flex-direction: column;
  background: #3a3a3a;
  color: #e0e0e0;
`;

const BrowserIcons = styled.div`
  height: 26px;
  display: flex;
  padding-left: 1215px;
  overflow: hidden;
  flex: none;
  background: linear-gradient(to right, #232323 1229px, transparent 1229px);
`;

const BrowserBtn = styled.div<{ $wide?: boolean }>`
  position: relative;
  width: 44px;
  margin-top: -3px;
  margin-left: ${({ $wide }) => ($wide ? '4px' : '0')};
  display: flex;
  justify-content: center;
  align-items: flex-start;
`;

const BrowserSep = styled.div`
  width: 1px;
  height: 15px;
  margin-right: -1px;
  background: #666;
`;

const MoreDots = styled.div`
  margin-top: 11px;
  margin-right: 4px;
  display: flex;
  gap: 2px;
  i {
    width: 2.5px;
    height: 2.5px;
    border-radius: 50%;
    background: #e0e0e0;
  }
`;

const TinyBadge = styled.span<{ $bg: string; $fg?: string }>`
  position: absolute;
  left: 24px;
  top: 17px;
  width: 11px;
  height: 11px;
  border-radius: 50%;
  background: ${({ $bg }) => $bg};
  color: ${({ $fg }) => $fg || '#fff'};
  font-size: 8px;
  line-height: 11px;
  text-align: center;
`;

const BookmarkBar = styled.div`
  height: 34px;
  flex: none;
  box-sizing: border-box;
  padding: 0 13px 4px 0;
  display: flex;
  align-items: center;
  justify-content: flex-end;
  color: #ccc;
`;

const BookmarkSep = styled.div`
  width: 1px;
  height: 18px;
  margin: 0 8px 0 10px;
  background: #555;
`;

const BookmarkLabel = styled.span`
  margin-left: 8px;
  font-size: 12px;
  color: #e4e4e4;
`;

const WebPage = styled.div`
  flex: 1;
  min-height: 0;
  margin-bottom: 3px;
  padding: 19px 0 18px;
  border-radius: 0 8px 8px 0;
  background: #0b1316;
  display: grid;
  grid-template-columns: 245px 1120px;
`;

const ChatList = styled.div`
  background: #10181c;
  border-right: 1px solid #222b30;
`;

const ChatMain = styled.div`
  display: flex;
  flex-direction: column;
  min-height: 0;
`;

const ChatHeader = styled.div`
  height: 59px;
  flex: none;
  background: #202c33;
  display: flex;
  align-items: center;
  justify-content: flex-end;
  gap: 39px;
  padding-right: 34px;
`;

const KebabDots = styled.div`
  display: flex;
  flex-direction: column;
  gap: 3px;
  i {
    width: 3.5px;
    height: 3.5px;
    border-radius: 50%;
    background: #aebac1;
  }
`;

const ChatBody = styled.div`
  position: relative;
  flex: 1;
  min-height: 0;
  background: #0b141a;
  display: flex;
  flex-direction: column;
  align-items: flex-end;
  justify-content: flex-end;
  padding-bottom: 65px;
  gap: 12px;
`;

const Wallpaper = styled.svg`
  position: absolute;
  right: 0;
  top: 0;
  fill: none;
  stroke: #172127;
  stroke-width: 1.2;
`;

const IncomingBubble = styled.div`
  position: relative;
  margin-right: 82px;
  padding: 0 11px;
  height: 32px;
  line-height: 32px;
  border-radius: 8px;
  background: #1f2a30;
  color: #ead9b8;
  font-size: 12.5px;
`;

const OutgoingBubble = styled.div`
  position: relative;
  margin-right: 69px;
  height: 33px;
  box-sizing: border-box;
  display: flex;
  align-items: flex-end;
  gap: 3px;
  padding: 0 6px 2px;
  background: #06644f;
  border-radius: 0 0 6px 6px;
  color: #9fd0c0;
  font-size: 10.7px;
  line-height: 16px;
  &::after {
    content: '';
    position: absolute;
    right: -7px;
    top: 0;
    border-top: 9px solid #06644f;
    border-right: 7px solid transparent;
  }
`;

const Composer = styled.div`
  height: 62px;
  flex: none;
  background: #202c33;
  display: flex;
  align-items: center;
  padding-left: 10px;
`;

const ComposerInput = styled.div`
  flex: 1;
  height: 42px;
  border-radius: 8px;
  background: #2a3942;
`;

const MicBtn = styled.div`
  width: 65px;
  box-sizing: border-box;
  padding: 3px 7px 0 0;
  display: flex;
  justify-content: center;
`;

const Explorer = styled.div`
  position: absolute;
  left: 125px;
  top: 900px;
  width: 1028px;
  height: 48px;
  padding: 25px 8px 0 14px;
  box-sizing: border-box;
  border: 1px solid #3d3d3d;
  border-radius: 8px;
  background: #1c1c1c;
  display: flex;
  align-items: center;
  gap: 10.5px;
`;

const StatusText = styled.span`
  font-size: 11.6px;
  color: #8e8e8e;
`;

const StatusBar = styled.span`
  width: 1px;
  height: 12px;
  background: #9a9a9a;
`;

const ExplorerViews = styled.div`
  margin-left: auto;
  display: flex;
  gap: 4px;
`;

/* ---------- acrobat window ---------- */
const AcrobatWindow = styled.div`
  position: absolute;
  left: 0;
  top: 4px;
  width: 1229px;
  height: 928px;
  display: flex;
  flex-direction: column;
  background: #323232;
  border-radius: 0 8px 8px 0;
  box-shadow: 0 0 0 1px #4a4a4a;
  overflow: hidden;
`;

const TitleBar = styled.div`
  height: 34px;
  flex: none;
  box-sizing: border-box;
  padding: 1px 1px 0 10px;
  display: flex;
  align-items: center;
  background: #1b1b1b;
  color: #e2e2e2;
`;

const MenuBtn = styled.div`
  width: 70px;
  display: flex;
  align-items: center;
  gap: 7px;
  color: #c6c6c6;
  font-size: 12px;
`;

const TitleSep = styled.div`
  width: 1px;
  height: 22px;
  background: #5a5a5a;
`;

const HomeBtn = styled.div`
  width: 35px;
  display: flex;
  justify-content: center;
  padding-right: 6px;
  box-sizing: border-box;
`;

const DocTab = styled.div`
  width: 210px;
  height: 32px;
  align-self: flex-end;
  box-sizing: border-box;
  padding: 0 10px;
  display: flex;
  align-items: center;
  background: #323232;
  border-radius: 6px 6px 0 0;
`;

const DocTabName = styled.span`
  flex: 1;
  margin-left: 6px;
  font-size: 14.2px;
  color: #e6e6e6;
`;

const CreateBtn = styled.div`
  width: 69px;
  height: 24px;
  margin-left: 4px;
  box-sizing: border-box;
  border: 1px solid #7c7c7c;
  border-radius: 5px;
  display: flex;
  align-items: center;
  justify-content: center;
  gap: 8px;
  font-size: 12px;
  color: #c6c6c6;
`;

const TitleRight = styled.div`
  margin-left: auto;
  display: flex;
  align-items: center;
`;

const TitleBtn = styled.div`
  position: relative;
  width: 32px;
  display: flex;
  justify-content: center;
`;

const BellDot = styled.span`
  position: absolute;
  left: 17px;
  top: -2px;
  width: 7px;
  height: 7px;
  border-radius: 50%;
  background: #2f80ed;
`;

const Avatar = styled.div`
  width: 18px;
  height: 19px;
  border-radius: 50%;
  background: linear-gradient(135deg, #b04ce6 0 22%, #f5d547 22% 62%, #a83ce0 62% 100%);
`;

const WindowBtn = styled.div<{ $first?: boolean }>`
  width: 49px;
  margin-left: ${({ $first }) => ($first ? '12px' : '0')};
  display: flex;
  justify-content: center;
`;

const MinimizeBar = styled.div`
  width: 15px;
  height: 2px;
  background: #e6e6e6;
`;

const MaximizeBox = styled.div`
  width: 10px;
  height: 10px;
  border: 1px solid #d8d8d8;
`;

const ToolBar = styled.div`
  height: 48px;
  flex: none;
  box-sizing: border-box;
  display: flex;
  padding: 0 5px 0 10px;
  gap: 24px;
  border-bottom: 1px solid #565656;
  background: #323232;
`;

const ToolTab = styled.div<{ $active?: boolean }>`
  display: flex;
  align-items: center;
  font-size: 14.2px;
  color: ${({ $active }) => ($active ? '#f0f0f0' : '#d6d6d6')};
  box-shadow: ${({ $active }) => ($active ? 'inset 0 -2px 0 #f4f4f4' : 'none')};
`;

const ToolRight = styled.div`
  margin-left: auto;
  display: flex;
  align-items: center;
  color: #dcdcdc;
`;

const SearchLabel = styled.span`
  font-size: 14.2px;
  color: #d6d6d6;
`;

const SearchIcon = styled.div`
  width: 20px;
  margin-left: 8px;
`;

const ToolSep = styled.div<{ $first?: boolean }>`
  width: 1px;
  height: 18px;
  margin: ${({ $first }) => ($first ? '0 4px 0 17px' : '0 4px')};
  background: #5e5e5e;
`;

const ToolBtn = styled.div<{ $dim?: boolean }>`
  width: 40px;
  display: flex;
  justify-content: center;
  color: ${({ $dim }) => ($dim ? '#6e6e6e' : '#dcdcdc')};
`;

const WindowBody = styled.div`
  flex: 1;
  min-height: 0;
  display: grid;
  grid-template-columns: 283px 1fr 47px;
`;

/* ---------- sidebar ---------- */
const Sidebar = styled.aside`
  display: flex;
  flex-direction: column;
  min-height: 0;
  background: #323232;
`;

const SidebarHeader = styled.div`
  height: 46px;
  flex: none;
  display: flex;
  align-items: center;
  justify-content: space-between;
  padding: 0 22px 0 20px;
`;

const SidebarTitle = styled.h2`
  margin: 0;
  font-size: 15.8px;
  font-weight: 700;
  color: #ececec;
`;

const SidebarClose = styled.div`
  margin-top: 8px;
  color: #d8d8d8;
`;

const ToolList = styled.div`
  margin-top: 6px;
  display: flex;
  flex-direction: column;
`;

const ToolRow = styled.div<{ $tight?: boolean }>`
  height: 40px;
  padding-left: 28px;
  display: flex;
  align-items: center;
  gap: ${({ $tight }) => ($tight ? '8px' : '11px')};
  font-size: 14.15px;
  color: #d6d6d6;
`;

const SidebarFooter = styled.div`
  margin: auto 26px 31px 21px;
  padding-top: 17px;
  border-top: 1px solid #666;
  display: flex;
  flex-direction: column;
  align-items: center;
`;

const FooterText = styled.p`
  margin: 0 2px 0 0;
  width: 230px;
  font-size: 12.2px;
  line-height: 15px;
  text-align: center;
  color: #dedede;
`;

const TrialBtn = styled.div`
  width: 193px;
  height: 32px;
  margin: 16px 2px 0 0;
  border-radius: 16px;
  background: #1473e6;
  color: #fff;
  font-size: 14.6px;
  font-weight: 700;
  line-height: 32px;
  text-align: center;
`;

/* ---------- document ---------- */
const Stage = styled.div`
  display: flex;
  flex-direction: column;
  min-width: 0;
  min-height: 0;
`;

const DocRow = styled.div`
  flex: 1;
  min-height: 0;
  display: flex;
`;

const Paper = styled.div`
  position: relative;
  flex: 1;
  min-width: 0;
  overflow: hidden;
  background: #fff;
`;

const Sheet = styled.div`
  width: 790px;
  padding: 71px 0 0 81px;
  transform: rotate(0.5deg);
  transform-origin: 0 0;
  filter: blur(0.2px);
  color: #222;
`;

const SheetTop = styled.div`
  height: 22px;
  display: flex;
  align-items: center;
`;

const Logo = styled.div`
  width: 278px;
  flex: none;
  padding-left: 4px;
  box-sizing: border-box;
  display: flex;
  align-items: center;
  gap: 5px;
`;

const LogoWords = styled.div`
  display: flex;
  flex-direction: column;
  gap: 1px;
`;

const LogoName = styled.span`
  font-family: "Liberation Serif", serif;
  font-size: 13.5px;
  line-height: 11px;
  letter-spacing: 1.7px;
  white-space: nowrap;
  transform: scaleX(1.3);
  transform-origin: 0 50%;
  color: #3a3a3a;
`;

const LogoTag = styled.span`
  font-size: 5.5px;
  line-height: 6px;
  letter-spacing: 2.85px;
  white-space: nowrap;
  color: #555;
`;

const ReportTitle = styled.h1`
  margin: 3px 0 0;
  font-size: 15px;
  font-weight: 700;
  white-space: nowrap;
  color: #262626;
`;

const InfoRow = styled.div`
  margin-top: 11px;
  display: flex;
`;

const SummaryList = styled.div`
  width: 410px;
  flex: none;
  display: flex;
  flex-direction: column;
  gap: 6.5px;
`;

const SummaryRow = styled.div`
  height: 13px;
  display: flex;
  font-size: 7.4px;
  font-weight: 700;
`;

const SummaryValue = styled.div`
  width: 113px;
  box-sizing: border-box;
  border: 1.5px solid #1e1e1e;
  border-right-width: 0;
  line-height: 9px;
  text-align: center;
`;

const dotted = `
  background-color: #c4c4c4;
  background-image: radial-gradient(#7c7c7c 0.5px, transparent 0.7px);
  background-size: 2px 2px;
`;

const SummaryLabel = styled.div<{ $total?: boolean }>`
  width: ${({ $total }) => ($total ? '193px' : '145px')};
  box-sizing: border-box;
  padding-right: 1px;
  border: 1.5px solid #2a2a2a;
  ${dotted}
  line-height: 11px;
  text-align: ${({ $total }) => ($total ? 'center' : 'right')};
`;

const SupervisorGrid = styled.div`
  margin-top: 20px;
  display: grid;
  grid-template-columns: 166px 192px;
  grid-auto-rows: 12px;
  row-gap: 7.5px;
`;

const SupervisorLabel = styled.div`
  font-size: 7.4px;
  font-weight: 700;
  line-height: 13px;
`;

const SupervisorValue = styled.div`
  box-sizing: border-box;
  padding-left: 1px;
  border: 1.3px solid #1e1e1e;
  font-size: 7.4px;
  font-weight: 700;
  line-height: 9px;
`;

const ReportTable = styled.table`
  margin-top: 8.5px;
  width: 768px;
  table-layout: fixed;
  border-collapse: collapse;
  border: 1.3px solid #222;
`;

const HeadCell = styled.th<{ $small?: boolean; $shift?: number }>`
  height: 19px;
  padding: 0 0 0 ${({ $shift }) => $shift || 0}px;
  border: 1px solid #333;
  ${dotted}
  font-size: ${({ $small }) => ($small ? '6.5px' : '7.2px')};
  font-weight: 700;
  line-height: 7.5px;
  text-align: center;
  color: #333;
  overflow: hidden;
  white-space: nowrap;
`;

const ReportTr = styled.tr<{ $h: number }>`
  height: ${({ $h }) => $h}px;
`;

const bodyCell = `
  padding: 0;
  border: 1px solid #3c3c3c;
  font-size: 7.5px;
  line-height: 1;
  white-space: nowrap;
  overflow: hidden;
  color: #333;
`;

const IdCell = styled.td`
  ${bodyCell}
  padding-left: 2px;
  font-family: "DejaVu Sans", sans-serif;
  font-size: 6.2px;
  font-weight: 700;
  color: #1e1e1e;
  vertical-align: middle;
  border-bottom-style: dotted;
`;

const NameCell = styled.td`
  ${bodyCell}
  padding: 0 0 1px 2px;
  vertical-align: bottom;
  color: #282828;
`;

const AmountCell = styled.td`
  ${bodyCell}
  padding: 0 4px 1px 0;
  vertical-align: bottom;
  text-align: right;
`;

const CenterCell = styled.td<{ $shift?: number }>`
  ${bodyCell}
  padding: 0 0 1px ${({ $shift }) => $shift || 0}px;
  vertical-align: bottom;
  text-align: center;
`;

const CodeCell = styled.td`
  ${bodyCell}
  padding-left: 2px;
  font-weight: 700;
  vertical-align: middle;
  color: #222;
`;

const TagCell = styled.td`
  ${bodyCell}
  padding-left: 5px;
  vertical-align: bottom;
`;

const CrossHair = styled.svg`
  position: absolute;
  left: 174px;
  top: 146px;
`;

const FloatingTools = styled.div`
  position: absolute;
  left: 13px;
  top: 12px;
  width: 39px;
  height: 252px;
  box-sizing: border-box;
  padding: 3px 3.5px 0;
  border-radius: 4px;
  background: #2b2b2b;
  display: flex;
  flex-direction: column;
  color: #dcdcdc;
`;

const Handle = styled.div`
  height: 4px;
  margin-bottom: 9px;
  border-radius: 1px;
  background: #6e6e6e;
`;

const FloatBtn = styled.div<{ $active?: boolean }>`
  position: relative;
  height: ${({ $active }) => ($active ? '32px' : '40px')};
  margin-bottom: ${({ $active }) => ($active ? '4px' : '0')};
  display: flex;
  align-items: center;
  justify-content: center;
  border-radius: 2px;
  background: ${({ $active }) => ($active ? '#1473e6' : 'transparent')};
  &::after {
    content: '';
    position: absolute;
    right: 3px;
    bottom: ${({ $active }) => ($active ? '3px' : '7px')};
    border-bottom: 4px solid #e6e6e6;
    border-left: 4px solid transparent;
  }
`;

const ScrollTrack = styled.div`
  width: 18px;
  flex: none;
  background: #1a1a1a;
  padding: 20px 0 0 8px;
  box-sizing: border-box;
`;

const ScrollThumb = styled.div`
  width: 2px;
  height: 47px;
  background: #8a8a8a;
`;

const DocStatus = styled.div`
  height: 18px;
  flex: none;
  display: flex;
  align-items: center;
  background: #101010;
`;

const PageSize = styled.div`
  width: 117px;
  height: 18px;
  background: #e4e4e4;
  color: #111;
  font-size: 12px;
  line-height: 18px;
  text-align: center;
`;

const HScroll = styled.div`
  width: 707px;
  height: 2px;
  margin-left: 18px;
  background: #a8a8a8;
`;

const StatusCorner = styled.div`
  width: 18px;
  height: 18px;
  margin-left: auto;
  background: #3a3a3a;
`;

const Rail = styled.div`
  padding: 5px 2px 10px 0;
  box-sizing: border-box;
  border-left: 1px solid #5a5a5a;
  background: #323232;
  display: flex;
  flex-direction: column;
  align-items: center;
  color: #dcdcdc;
`;

const RailBtn = styled.div<{ $h: number; $dim?: boolean; $gap?: boolean }>`
  height: ${({ $h }) => $h}px;
  margin-top: ${({ $gap }) => ($gap ? '11px' : '0')};
  flex: none;
  display: flex;
  align-items: center;
  justify-content: center;
  color: ${({ $dim }) => ($dim ? '#757575' : '#dcdcdc')};
`;

const RailSpacer = styled.div`
  flex: 1;
`;

const PageBox = styled.div`
  width: 31px;
  height: 31px;
  flex: none;
  box-sizing: border-box;
  border: 1px solid #7a7a7a;
  border-radius: 3px;
  background: #1c1c1c;
  color: #e8e8e8;
  font-size: 12px;
  line-height: 27px;
  text-align: center;
`;

const PageTotal = styled.div`
  height: 24px;
  margin-top: 4px;
  flex: none;
  font-size: 13px;
  line-height: 24px;
  color: #e8e8e8;
`;

const RailSep = styled.div`
  width: 33px;
  height: 1px;
  margin: 6px 0 5px;
  flex: none;
  background: #6a6a6a;
`;

/* ---------- taskbar ---------- */
const Taskbar = styled.div`
  height: 50px;
  flex: none;
  box-sizing: border-box;
  display: flex;
  align-items: center;
  padding: 2px 0 0 20px;
  border-top: 1px solid #2a3c4c;
  background: #10263a;
  color: #eef2f5;
`;

const StartBtn = styled.div`
  width: 44px;
  display: flex;
  justify-content: center;
  flex: none;
`;

const SearchPill = styled.div`
  width: 116px;
  height: 34px;
  margin-left: 4px;
  box-sizing: border-box;
  padding-left: 20px;
  border-radius: 17px;
  background: #1b3246;
  display: flex;
  align-items: center;
  gap: 5px;
  font-size: 12px;
  flex: none;
`;

const TaskIcons = styled.div`
  margin-left: 4px;
  display: flex;
`;

const TaskBtn = styled.div`
  position: relative;
  width: 43.85px;
  height: 46px;
  display: flex;
  align-items: center;
  justify-content: center;
`;

const TaskDot = styled.span`
  position: absolute;
  left: 19px;
  bottom: 0;
  width: 6px;
  height: 3px;
  border-radius: 2px;
  background: #9aa4ad;
`;

const TaskBadge = styled.span<{ $bg?: string }>`
  position: absolute;
  left: 24px;
  top: 3px;
  width: 15px;
  height: 15px;
  border-radius: 50%;
  background: ${({ $bg }) => $bg};
  color: #10263a;
  font-size: 11px;
  line-height: 15px;
  text-align: center;
`;

const TaskTag = styled.span`
  position: absolute;
  left: 14px;
  bottom: 7px;
  padding: 0 1px;
  border-radius: 2px;
  background: #f5c33b;
  color: #3a2a00;
  font-size: 7px;
  font-weight: 700;
  line-height: 9px;
`;

const Tray = styled.div`
  margin-left: auto;
  padding: 2px 18px 0 0;
  display: flex;
  align-items: center;
`;

const TrayChevron = styled.div`
  width: 14px;
`;

const TrayNumber = styled.div`
  margin-left: 18px;
  width: 24px;
  font-size: 14.5px;
`;

const TrayLang = styled.div`
  margin-left: 9px;
  width: 30px;
  font-size: 11px;
  line-height: 16px;
  text-align: center;
`;

const TrayIcons = styled.div`
  margin-left: 13px;
  display: flex;
  gap: 3px;
`;

const Clock = styled.div`
  margin: 0 10px 0 17.5px;
  font-size: 12.2px;
  line-height: 16px;
  text-align: right;
`;

export default App;
